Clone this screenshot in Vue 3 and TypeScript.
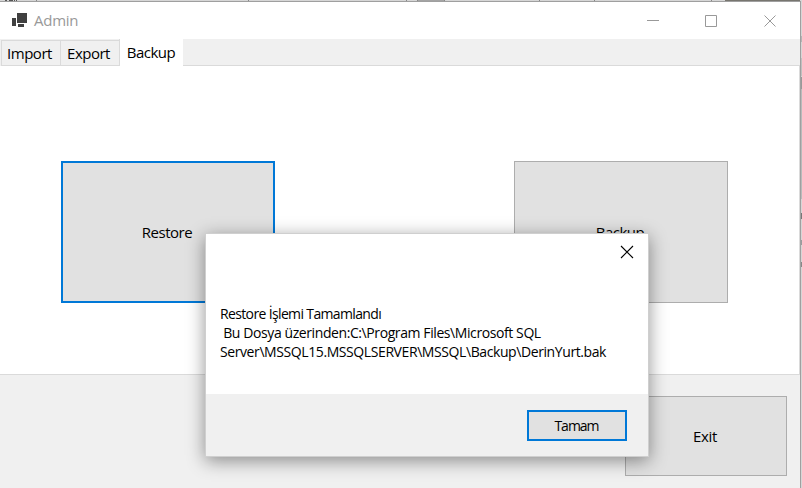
<script setup lang="ts">
import { ref } from 'vue'

const tabs: string[] = ['Import', 'Export', 'Backup']
const activeTab = ref('Backup')
const messageOpen = ref(true)
const message: string[] = [
  'Restore İşlemi Tamamlandı',
  ' Bu Dosya üzerinden:C:\\Program Files\\Microsoft SQL',
  'Server\\MSSQL15.MSSQLSERVER\\MSSQL\\Backup\\DerinYurt.bak',
]
</script>

<template>
  <div class="screen">
    <svg class="desktop" width="802" height="488" shape-rendering="crispEdges" aria-hidden="true">
      <rect width="802" height="488" fill="#d6d6d6" />
      <rect x="417" y="0" width="28" height="1" fill="#a4a4a4" />
      <rect x="725" y="0" width="75" height="1" fill="#77756f" />
      <path d="M36.5 0v1M248.5 0v1M406.5 0v1M417.5 0v1M444.5 0v1M539.5 0v1M594.5 0v1M711.5 0v1" stroke="#888" />
      <path d="M5 .5h2M9 .5h4M14 .5h1M16 .5h1" stroke="#555" />
      <rect x="0" y="1" width="801" height="1" fill="#9f9f9f" />
      <rect x="800" y="2" width="1" height="486" fill="#a0a0a0" />
      <rect x="801" y="36" width="1" height="6" fill="#b5b5b5" />
      <rect x="801" y="58" width="1" height="18" fill="#c0c0c0" />
      <rect x="801" y="77" width="1" height="12" fill="#999" />
      <rect x="801" y="89" width="1" height="110" fill="#b9bbbb" />
      <rect x="801" y="213" width="1" height="6" fill="#777" />
      <rect x="801" y="240" width="1" height="5" fill="#9a9c9e" />
      <rect x="801" y="262" width="1" height="5" fill="#888" />
    </svg>

    <main class="window">
      <header class="titlebar">
        <svg class="app-icon" width="16" height="16" viewBox="0 0 16 16" shape-rendering="crispEdges" aria-hidden="true">
          <rect x="6" y="0" width="10" height="10" fill="#404040" />
          <rect x="1" y="5" width="4" height="8" fill="#404040" />
          <rect x="7" y="11" width="6" height="3" fill="#404040" />
        </svg>
        <span class="title">Admin</span>
        <svg class="controls" width="126" height="14" fill="none" stroke="#999" aria-hidden="true">
          <path d="M0 6.5h12M58.500 1.500h11v11h-11z" />
          <path d="M117.500 1.500l11 11m0-11l-11 11" />
        </svg>
      </header>

      <nav class="tabs">
        <button v-for="tab in tabs" :key="tab" class="tab" :class="{ active: tab === activeTab }" @click="activeTab = tab">{{ tab }}</button>
        <span class="tabs-rest"></span>
      </nav>

      <section class="page">
        <button class="btn big focused">Restore</button>
        <button class="btn big">Backup</button>
      </section>

      <footer class="bottom">
        <button class="btn exit">Exit</button>
      </footer>
    </main>

    <div v-if="messageOpen" class="dialog" role="dialog">
      <div class="dialog-head">
        <svg width="14" height="14" fill="none" stroke="#000" stroke-width="1.1" aria-hidden="true" @click="messageOpen = false">
          <path d="M1 1l12 12M13 1L1 13" />
        </svg>
      </div>
      <div class="dialog-body">
        <div v-for="(line, i) in message" :key="i" class="line" :class="'line-' + i">{{ line }}</div>
      </div>
      <div class="dialog-foot">
        <button class="btn ok" @click="messageOpen = false">Tamam</button>
      </div>
    </div>
  </div>
</template>

<style>
body {
  overflow: hidden;
}
</style>

<style scoped>
.screen {
  position: relative;
  box-sizing: border-box;
  width: 802px;
  height: 488px;
  padding: 2px 2px 0 0;
  overflow: hidden;
  font-family: "Open Sans", "Noto Sans", sans-serif;
  font-size: 15px;
  letter-spacing: -0.5px;
  color: #000;
}
.desktop {
  position: absolute;
  left: 0;
  top: 0;
}
.window {
  position: relative;
  display: flex;
  flex-direction: column;
  height: 486px;
  background: #f0f0f0;
}
button {
  box-sizing: border-box;
  margin: 0;
  padding: 0;
  border: 0;
  border-radius: 0;
  font: inherit;
  color: inherit;
  letter-spacing: inherit;
}
.titlebar {
  display: flex;
  align-items: center;
  height: 37px;
  padding: 0 24px 0 11px;
  background: #fff;
}
.app-icon {
  margin-right: 7px;
}
.title {
  flex: 1;
  padding-bottom: 2px;
  color: #999;
  letter-spacing: -0.25px;
}
.controls {
  overflow: visible;
  margin-right: 3px;
}
.tabs {
  display: flex;
  height: 27px;
  padding-left: 1px;
}
.tab {
  width: 59px;
  height: 26px;
  margin-top: 1px;
  padding: 0 3px 2px 0;
  border: 1px solid #dadada;
  border-right: 0;
  background: #f0f0f0;
  line-height: 24px;
}
.tab.active {
  width: 64px;
  height: 27px;
  margin-top: 0;
  padding: 0 1px 2px 0;
  border-width: 0 1px 0 1px;
  background: #fff;
  line-height: 24px;
}
.tabs-rest {
  flex: 1;
  border-bottom: 1px solid #dadada;
}
.page {
  display: flex;
  box-sizing: border-box;
  justify-content: space-between;
  align-items: flex-start;
  height: 309px;
  padding: 95px 71px 0 61px;
  border-right: 1px solid #dadada;
  border-bottom: 1px solid #dadada;
  background: #fff;
}
.btn {
  border: 1px solid #adadad;
  background: #e1e1e1;
}
.btn.big {
  width: 214px;
  height: 142px;
  padding-right: 2px;
}
.btn.focused {
  border: 2px solid #0078d7;
}
.bottom {
  display: flex;
  justify-content: flex-end;
  padding: 21px 13px 0 0;
}
.btn.exit {
  width: 162px;
  height: 80px;
  padding-right: 2px;
  letter-spacing: -0.3px;
}
.dialog {
  position: absolute;
  left: 205px;
  top: 233px;
  box-sizing: border-box;
  display: flex;
  flex-direction: column;
  width: 444px;
  height: 224px;
  border: 1px solid #cfcfcf;
  background: #fff;
  background-clip: padding-box;
  box-shadow: 0 4px 17px rgba(0, 0, 0, 0.42);
  font-size: 14px;
}
.dialog-head {
  display: flex;
  justify-content: flex-end;
  padding: 11px 14px 0 0;
  height: 59px;
}
.dialog-body {
  flex: 1;
  padding-left: 14px;
}
.line {
  line-height: 19px;
  letter-spacing: -0.41px;
  white-space: pre;
}
.line-0 {
  letter-spacing: -0.64px;
}
.dialog-foot {
  display: flex;
  box-sizing: border-box;
  justify-content: flex-end;
  height: 62px;
  padding: 16px 21px 0 0;
  background: #f0f0f0;
}
.btn.ok {
  width: 100px;
  height: 31px;
  padding-right: 1px;
  border: 2px solid #0078d7;
  letter-spacing: -1px;
}
</style>
